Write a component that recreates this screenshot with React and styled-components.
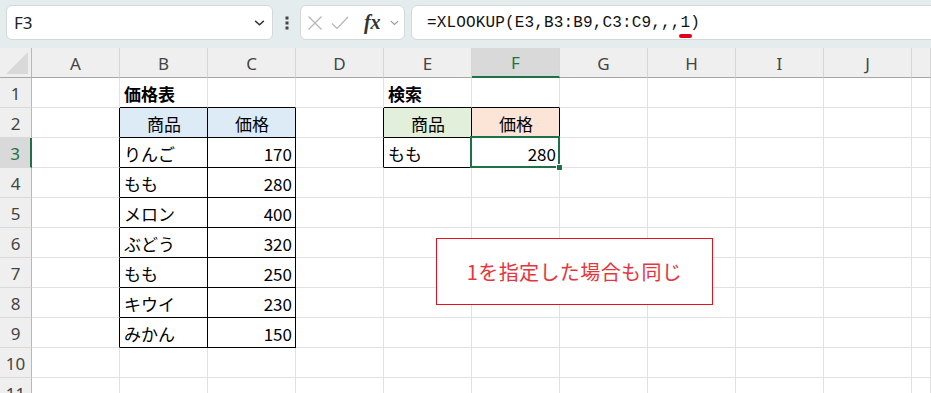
import React from 'react';
import styled, { createGlobalStyle, css } from 'styled-components';

const GlobalStyle = createGlobalStyle`
  html, body { margin: 0; padding: 0; background: #fff; }
  body {
    font-family: "Noto Sans CJK JP", "Noto Sans", sans-serif;
    overflow: hidden;
  }
`;

//<editor-fold desc="Styled Components">
const Page = styled.div`
  width: 931px;
  height: 393px;
  overflow: hidden;
  position: relative;
  background: #fff;
`;

const Toolbar = styled.div`
  height: 48px;
  box-sizing: border-box;
  padding: 5px 0 0 6px;
  display: flex;
  align-items: flex-start;
  background: #e4eced;
`;

const Box = styled.div`
  box-sizing: border-box;
  height: 35px;
  background: #fff;
  border: 1px solid #d4d8d8;
  border-radius: 6px;
  display: flex;
  align-items: center;
`;

const NameBox = styled(Box)`
  width: 267px;
  padding: 0 6px 0 7px;
  justify-content: space-between;
  font-family: "Noto Sans", sans-serif;
  font-size: 17px;
  color: #222;
`;

const Dots = styled.div`
  width: 27px;
  height: 35px;
  display: flex;
  align-items: center;
  justify-content: center;
`;

const FxBox = styled(Box)`
  width: 105px;
  padding: 0 4px 0 6px;
  justify-content: space-between;
`;

const FxLabel = styled.span`
  font-family: "Liberation Serif", serif;
  font-style: italic;
  font-weight: 700;
  font-size: 20px;
  color: #333;
  margin-left: 6px;
`;

const FormulaBox = styled(Box)`
  flex: 1;
  margin-left: 6px;
  margin-right: -12px;
  padding-left: 15px;
  font-family: "Liberation Mono", monospace;
  font-size: 16px;
  letter-spacing: 0.15px;
  color: #111;
`;

const Marked = styled.span`
  position: relative;
  &::after {
    content: '';
    position: absolute;
    left: -2px;
    right: -2px;
    bottom: -6px;
    height: 4px;
    border-radius: 2px;
    background: #e3001b;
  }
`;

const Sheet = styled.div`
  display: grid;
  grid-template-columns: 32px repeat(10, 88px) 1fr;
  grid-auto-rows: 30px;
`;

const HeadCell = styled.div`
  box-sizing: border-box;
  background: ${p => (p.$active ? '#d9d9d9' : '#efefef')};
  border-right: 1px solid #d6d6d6;
  border-bottom: ${p => (p.$active ? '2px solid #1e7145' : '1px solid #a6a6a6')};
  display: flex;
  align-items: center;
  justify-content: center;
  font-family: "Noto Sans", sans-serif;
  font-size: 17px;
  color: ${p => (p.$active ? '#1e7145' : '#444')};
  padding-top: 1px;
`;

const Corner = styled(HeadCell)`
  border-right: 1px solid #b8b8b8;
  align-items: flex-end;
  justify-content: flex-end;
  padding: 0 3px 3px 0;
`;

const RowHead = styled.div`
  box-sizing: border-box;
  background: ${p => (p.$active ? '#d9d9d9' : '#efefef')};
  border-right: ${p => (p.$active ? '2px solid #1e7145' : '1px solid #b8b8b8')};
  border-bottom: 1px solid #d9d9d9;
  display: flex;
  align-items: center;
  justify-content: center;
  font-family: "Noto Sans", sans-serif;
  font-size: 17px;
  color: ${p => (p.$active ? '#1e7145' : '#444')};
  padding-top: 1px;
`;

const Cell = styled.div`
  box-sizing: border-box;
  position: relative;
  border-right: 1px solid ${p => (p.$rb ? '#000' : '#e1e1e1')};
  border-bottom: 1px solid ${p => (p.$bb ? '#000' : '#e1e1e1')};
  background: ${p => p.$fill || '#fff'};
  display: flex;
  align-items: center;
  justify-content: ${p =>
    p.$align === 'right' ? 'flex-end' : p.$align === 'center' ? 'center' : 'flex-start'};
  padding: 1px 3px 0 4px;
  font-size: 17px;
  font-weight: ${p => (p.$bold ? 700 : 400)};
  color: #000;
  white-space: nowrap;
  ${p =>
    p.$selected &&
    css`
      z-index: 2;
      &::after {
        content: '';
        position: absolute;
        left: -2px;
        top: -2px;
        right: -1px;
        bottom: -1px;
        border: 2px solid #1e7145;
      }
    `}
`;

const Handle = styled.span`
  position: absolute;
  right: -4px;
  bottom: -4px;
  width: 5px;
  height: 5px;
  background: #1e7145;
  border: 1px solid #fff;
  z-index: 3;
`;

const Note = styled.div`
  position: absolute;
  left: 436px;
  top: 238px;
  width: 277px;
  height: 67px;
  box-sizing: border-box;
  border: 1px solid #e3141f;
  background: #fff;
  display: flex;
  align-items: center;
  justify-content: center;
  font-size: 20px;
  letter-spacing: 0.4px;
  color: #e8343d;
`;
//</editor-fold>

const Chevron = ({ size = 12, color = '#444' }) => (
  <svg width={size} height={size} viewBox="0 0 12 12">
    <path d="M2 4.5 L6 8.2 L10 4.5" fill="none" stroke={color} strokeWidth="1.3" />
  </svg>
);

const COLS = ['A', 'B', 'C', 'D', 'E', 'F', 'G', 'H', 'I', 'J', ''];

const fruits = [
  ['りんご', 170],
  ['もも', 280],
  ['メロン', 400],
  ['ぶどう', 320],
  ['もも', 250],
  ['キウイ', 230],
  ['みかん', 150],
];

const BLUE = '#ddebf7';
const GREEN = '#e2efda';
const ORANGE = '#fce4d6';

const cells = {
  '1-1': { text: '価格表', bold: true },
  '1-4': { text: '検索', bold: true },
  '2-1': { text: '商品', align: 'center', fill: BLUE },
  '2-2': { text: '価格', align: 'center', fill: BLUE },
  '2-4': { text: '商品', align: 'center', fill: GREEN },
  '2-5': { text: '価格', align: 'center', fill: ORANGE },
  '3-4': { text: 'もも' },
  '3-5': { text: '280', align: 'right', selected: true },
};
fruits.forEach(([name, price], i) => {
  cells[`${i + 3}-1`] = { text: name };
  cells[`${i + 3}-2`] = { text: String(price), align: 'right' };
});

const inTable = (r, c) =>
  (r >= 2 && r <= 9 && c >= 1 && c <= 2) || (r >= 2 && r <= 3 && c >= 4 && c <= 5);

const ROWS = [1, 2, 3, 4, 5, 6, 7, 8, 9, 10, 11];

const App = () => {
  return (
    <Page>
      <GlobalStyle />
      <Toolbar>
        <NameBox>
          <span>F3</span>
          <Chevron size={13} color="#333" />
        </NameBox>
        <Dots>
          <svg width="4" height="14" viewBox="0 0 4 14">
            <rect x="0.5" y="0.5" width="3" height="3" fill="#444" />
            <rect x="0.5" y="5.5" width="3" height="3" fill="#444" />
            <rect x="0.5" y="10.5" width="3" height="3" fill="#444" />
          </svg>
        </Dots>
        <FxBox>
          <svg width="16" height="16" viewBox="0 0 16 16">
            <path d="M1.5 1.5 L14.5 14.5 M14.5 1.5 L1.5 14.5" stroke="#b5b5b5" strokeWidth="1.2" />
          </svg>
          <svg width="18" height="16" viewBox="0 0 18 16">
            <path d="M1 8.5 L6 13.5 L17 2" fill="none" stroke="#b5b5b5" strokeWidth="1.2" />
          </svg>
          <FxLabel>fx</FxLabel>
          <Chevron size={11} color="#999" />
        </FxBox>
        <FormulaBox>
          =XLOOKUP(E3,B3:B9,C3:C9,,,<Marked>1</Marked>)
        </FormulaBox>
      </Toolbar>

      <Sheet>
        <Corner>
          <svg width="22" height="22" viewBox="0 0 22 22">
            <polygon points="0,22 22,0 22,22" fill="#d9d9d9" />
          </svg>
        </Corner>
        {COLS.map((c, i) => (
          <HeadCell key={`h${i}`} $active={c === 'F'}>
            {c}
          </HeadCell>
        ))}
        {ROWS.map(r => (
          <React.Fragment key={r}>
            <RowHead $active={r === 3}>{r}</RowHead>
            {COLS.map((_, c) => {
              const d = cells[`${r}-${c}`] || {};
              return (
                <Cell
                  key={`${r}-${c}`}
                  $rb={inTable(r, c) || inTable(r, c + 1)}
                  $bb={inTable(r, c) || inTable(r + 1, c)}
                  $fill={d.fill}
                  $align={d.align}
                  $bold={d.bold}
                  $selected={d.selected}
                >
                  {d.text}
                  {d.selected && <Handle />}
                </Cell>
              );
            })}
          </React.Fragment>
        ))}
      </Sheet>

      <Note>1を指定した場合も同じ</Note>
    </Page>
  );
};

export default App;
